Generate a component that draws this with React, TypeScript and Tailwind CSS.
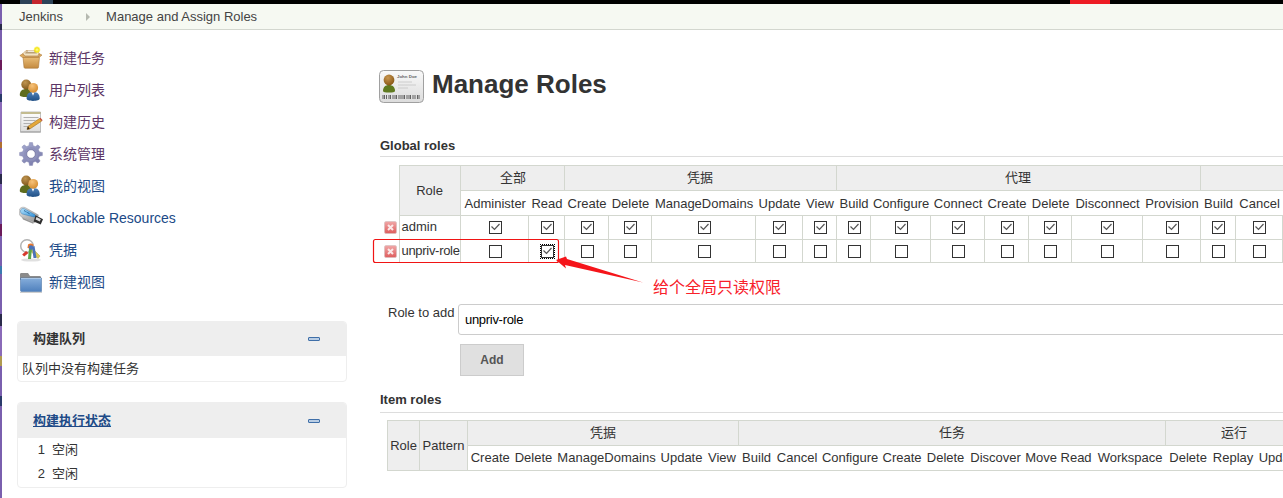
import React from "react";

const gearPath = (() => {
  const teeth = 8, cx = 12, cy = 12, ro = 11.5, ri = 8.6;
  let d = "";
  for (let i = 0; i < teeth; i++) {
    const a = (i / teeth) * Math.PI * 2 - Math.PI / 2;
    const s = (Math.PI * 2) / teeth;
    const pts: [number, number][] = [
      [ri, a - s * 0.32],
      [ro, a - s * 0.17],
      [ro, a + s * 0.17],
      [ri, a + s * 0.32],
    ];
    for (const [r, t] of pts) {
      d += `${d ? "L" : "M"}${(cx + r * Math.cos(t)).toFixed(2)} ${(cy + r * Math.sin(t)).toFixed(2)}`;
    }
  }
  return d + "Z";
})();

function BoxIcon() {
  return (
    <svg width="24" height="24" viewBox="0 0 24 24">
      <defs>
        <linearGradient id="boxa" x1="0" y1="0" x2="0" y2="1">
          <stop offset="0" stopColor="#e9bd78" />
          <stop offset="1" stopColor="#c48a3f" />
        </linearGradient>
        <radialGradient id="boxs">
          <stop offset="0" stopColor="#ffffa0" />
          <stop offset="0.55" stopColor="#f5e613" />
          <stop offset="1" stopColor="#f5e613" stopOpacity="0" />
        </radialGradient>
      </defs>
      <path d="M4 7.5 L7 4.5 H18 L20 7.5 L19 10 H5Z" fill="#f2e3c4" stroke="#b98a4c" strokeWidth=".6" />
      <path d="M7 5.5h10l1 2H6z" fill="#8a6a3a" opacity=".55" />
      <path d="M4 11h16.5l-1 10.3c-.1.6-.5.9-1 .9H6c-.6 0-1-.4-1-.9z" fill="url(#boxa)" stroke="#a87636" strokeWidth=".6" />
      <path d="M.8 9.5 4 7.6 6 10.4H21.5L23 9 20 7.6 19.5 11.5H3.5z" fill="#dca95f" stroke="#a87636" strokeWidth=".5" />
      <rect x="9" y="4.6" width="6" height="1.2" fill="#fff" opacity=".8" />
      <circle cx="18" cy="3.8" r="3.8" fill="url(#boxs)" />
    </svg>
  );
}

function UsersIcon({ id }: { id: string }) {
  return (
    <svg width="24" height="24" viewBox="0 0 24 24">
      <defs>
        <radialGradient id={id + "a"} cx=".4" cy=".3" r=".8">
          <stop offset="0" stopColor="#c09550" />
          <stop offset="1" stopColor="#7a5116" />
        </radialGradient>
        <radialGradient id={id + "b"} cx=".4" cy=".3" r=".8">
          <stop offset="0" stopColor="#f7c27a" />
          <stop offset="1" stopColor="#cf8526" />
        </radialGradient>
        <linearGradient id={id + "c"} x1="0" y1="0" x2="0" y2="1">
          <stop offset="0" stopColor="#4f80b8" />
          <stop offset="1" stopColor="#1f4f85" />
        </linearGradient>
      </defs>
      <path d="M.8 17c0-4 2.5-6 6.5-6s6.5 2.5 6.5 6c0 1.6-2.5 2-6.5 2s-6.5-.4-6.5-2z" fill="#5e6c1d" />
      <circle cx="7.2" cy="6.5" r="4.9" fill={`url(#${id}a)`} />
      <path d="M7.6 20.5c0-4.4 2-6.5 6.4-6.5s6.7 2 6.7 6.5c0 1.7-3 2.4-6.7 2.4s-6.400-.7-6.400-2.400z" fill={`url(#${id}c)`} />
      <path d="M12.500 14.200h3l-1.500 3.500z" fill="#fff" />
      <circle cx="14.200" cy="9.800" r="4.900" fill={`url(#${id}b)`} />
    </svg>
  );
}

function NoteIcon() {
  return (
    <svg width="24" height="24" viewBox="0 0 24 24">
      <defs>
        <linearGradient id="notea" x1="0" y1="0" x2="0" y2="1">
          <stop offset="0" stopColor="#ffffff" />
          <stop offset="1" stopColor="#dcdcdc" />
        </linearGradient>
      </defs>
      <rect x="1" y="20.500" width="21" height="2.500" rx="1" fill="#bdbdbd" />
      <path d="M2 2h19.500v19.500H1.500z" fill="url(#notea)" stroke="#a8a8a8" strokeWidth=".7" />
      <path d="M2.200 2h19.200v2H2.200z" fill="#d6cfa0" />
      <path d="M2.500 3h19" stroke="#8c8460" strokeWidth="1.100" strokeDasharray="1 1" />
      <path d="M4.500 7.500h15M4.500 10.500h12M4.500 13.500h8M4.500 16.500h5" stroke="#a9a9a9" strokeWidth=".9" />
      <path d="M8 19.500 9 16.300 20.500 8.500l2.300 2.500L10.800 19z" fill="#e4a83a" stroke="#8c5f16" strokeWidth=".5" />
      <path d="M8 19.500 9 16.300 10.800 19z" fill="#3a2a14" />
      <path d="M20.500 8.500l2.300 2.500 .9-.8-2.200-2.500z" fill="#c84a3a" />
    </svg>
  );
}

function GearIcon() {
  return (
    <svg width="24" height="24" viewBox="0 0 24 24">
      <defs>
        <linearGradient id="geara" x1="0" y1="0" x2=".6" y2="1">
          <stop offset="0" stopColor="#a6abd0" />
          <stop offset="1" stopColor="#7d7fae" />
        </linearGradient>
      </defs>
      <path d={gearPath} fill="url(#geara)" stroke="#8a8cb4" strokeWidth=".5" strokeLinejoin="round" />
      <circle cx="12" cy="12" r="7" fill="#8e91bb" />
      <circle cx="12" cy="12" r="4.300" fill="#fff" stroke="#6b6d98" strokeWidth=".7" />
    </svg>
  );
}

function UsbIcon() {
  return (
    <svg width="24" height="24" viewBox="0 0 24 24">
      <defs>
        <linearGradient id="usba" x1="0" y1="0" x2="1" y2="1">
          <stop offset="0" stopColor="#e6e6e6" />
          <stop offset="1" stopColor="#8f8f8f" />
        </linearGradient>
        <linearGradient id="usbb" x1="0" y1="0" x2="1" y2="1">
          <stop offset="0" stopColor="#b5e2fb" />
          <stop offset="1" stopColor="#2f8fd6" />
        </linearGradient>
      </defs>
      <path d="M0 5.500C0 2 3 .5 6 1.500L19.500 9l-3.600 7.500L3 11.300C1 10.400 0 8 0 5.500z" fill="url(#usba)" stroke="#808080" strokeWidth=".4" />
      <path d="M1.500 5C1.500 3 3.500 2 5.500 2.800L16 8.800c.6.500.5 1.200 0 1.700-.5.500-1.200.6-2 .3L3.500 8C2.200 7.500 1.500 6.300 1.500 5z" fill="url(#usbb)" stroke="#1f6aa8" strokeWidth=".4" />
      <path d="M5 4.500l6 3.500" stroke="#0e4a80" strokeWidth=".9" strokeDasharray="1 .6" />
      <path d="M16.500 9.200 24 13.200l-2.300 5.300-7-3z" fill="#2e2e2e" />
      <path d="M17.500 11l4.300 2.300-1 2.200-4.200-1.900z" fill="#dcdcdc" />
      <path d="M3 11.500l12 5-.8 1.200L4 13.500z" fill="#6a6a6a" opacity=".7" />
    </svg>
  );
}

function KeysIcon() {
  return (
    <svg width="24" height="24" viewBox="0 0 24 24">
      <ellipse cx="12" cy="22" rx="10" ry="1.600" fill="#000" opacity=".12" />
      <circle cx="8" cy="8" r="6.300" fill="none" stroke="#c4c4c4" strokeWidth="1.500" />
      <circle cx="8" cy="8" r="6.300" fill="none" stroke="#8a8a8a" strokeWidth=".4" />
      <path d="M12 9l9 9-2 2.500L10.500 12z" fill="#d9c95a" stroke="#9c8f30" strokeWidth=".4" />
      <path d="M10 10l-1 11h3l1-11z" fill="#5aa648" />
      <path d="M13 9l1.500 11h3l-2-12z" fill="#4a72b8" />
      <path d="M7 13l-3.800 3.500 2 2 4.300-3.500z" fill="#d83a2c" />
      <path d="M9 6.500c2-1.500 4.300-1.200 5.700.5l-2.700 3.800-3.500-.8z" fill="#e8772e" />
      <circle cx="12" cy="9.500" r="2.200" fill="#4a72b8" />
    </svg>
  );
}

function FolderIcon() {
  return (
    <svg width="24" height="24" viewBox="0 0 24 24">
      <defs>
        <linearGradient id="folda" x1="0" y1="0" x2="0" y2="1">
          <stop offset="0" stopColor="#86aedb" />
          <stop offset="1" stopColor="#4f80bd" />
        </linearGradient>
      </defs>
      <path d="M1 4.500C1 3.500 1.500 3 2.500 3H9l2 3h9.500c1 0 1.500.5 1.500 1.500V10H1z" fill="#8b8b8b" />
      <path d="M1.500 8h21v13.500H2.500c-.6 0-1-.4-1-1z" fill="url(#folda)" stroke="#3e6a9f" strokeWidth=".5" />
      <path d="M2 8.500h20" stroke="#b7d0ec" strokeWidth=".8" />
      <path d="M1 22h22v1H1z" fill="#cfcfcf" />
    </svg>
  );
}

function CardIcon() {
  return (
    <svg width="48" height="48" viewBox="0 0 48 48">
      <defs>
        <linearGradient id="carda" x1="0" y1="0" x2="0" y2="1">
          <stop offset="0" stopColor="#f9f9f9" />
          <stop offset="1" stopColor="#dcdcdc" />
        </linearGradient>
        <radialGradient id="cardb" cx=".4" cy=".3" r=".8">
          <stop offset="0" stopColor="#c9964f" />
          <stop offset="1" stopColor="#80500f" />
        </radialGradient>
      </defs>
      <rect x="2.500" y="10.500" width="44" height="32" rx="4" fill="url(#carda)" stroke="#a0a0a0" strokeWidth="1" />
      <path d="M6 31c0-4 2.500-6 6-6s6 2 6 6c0 1-2.500 1.500-6 1.500S6 32 6 31z" fill="#5f7a1f" />
      <circle cx="12" cy="20" r="5.400" fill="url(#cardb)" />
      <text x="20" y="18" fontSize="4.400" fontWeight="700" fill="#666" fontFamily="Liberation Sans, sans-serif">John Doe</text>
      <path d="M21 22h14M21 25h18M21 28h10" stroke="#cccccc" strokeWidth="1" />
      <path d="M6 35v4M7.500 35v4M9.500 35v4M12 35v4M13.500 35v4M16 35v4M18 35v4M19.500 35v4M22 35v4M24 35v4M26 35v4M27.500 35v4M30 35v4M32 35v4M33.500 35v4M36 35v4M38 35v4M40.500 35v4M42 35v4" stroke="#555" strokeWidth=".9" />
    </svg>
  );
}

function DeleteIcon() {
  return (
    <svg width="13" height="13" viewBox="0 0 13 13" className="block">
      <defs>
        <linearGradient id="dela" x1="0" y1="0" x2="0" y2="1">
          <stop offset="0" stopColor="#f0a8a8" />
          <stop offset="1" stopColor="#de5c5c" />
        </linearGradient>
      </defs>
      <rect x=".5" y=".5" width="12" height="12" rx="1.500" fill="url(#dela)" stroke="#d9c0c0" strokeWidth=".7" />
      <path d="M4 4l5 5M9 4l-5 5" stroke="#fbe9e9" strokeWidth="2" />
    </svg>
  );
}

function MinusIcon() {
  return <div className="w-[12px] h-[4px] rounded-[1px] border border-[#3f6fa8] bg-[#b9cde4]" />;
}

function Check({ checked, focus }: { checked?: boolean; focus?: boolean }) {
  return (
    <span
      className={
        focus
          ? "inline-block align-middle w-[13px] h-[13px] border border-[#333] bg-white outline-1 outline-dotted outline-black outline-offset-0"
          : "inline-block align-middle w-[13px] h-[13px] border border-[#333] bg-white"
      }
    >
      {checked && (
        <svg width="11" height="11" viewBox="0 0 11 11" className="block">
          <path d="M1.500 4.500 4.500 7.500 9.500 2" fill="none" stroke="#555" strokeWidth="1.200" />
        </svg>
      )}
    </span>
  );
}

const globalCols = [
  { label: "Administer", w: "w-[68px]" },
  { label: "Read", w: "w-[36px]" },
  { label: "Create", w: "w-[44px]" },
  { label: "Delete", w: "w-[43px]" },
  { label: "ManageDomains", w: "w-[104px]" },
  { label: "Update", w: "w-[47px]" },
  { label: "View", w: "w-[34px]" },
  { label: "Build", w: "w-[34px]" },
  { label: "Configure", w: "w-[60px]" },
  { label: "Connect", w: "w-[54px]" },
  { label: "Create", w: "w-[44px]" },
  { label: "Delete", w: "w-[43px]" },
  { label: "Disconnect", w: "w-[71px]" },
  { label: "Provision", w: "w-[58px]" },
  { label: "Build", w: "w-[35px]" },
  { label: "Cancel", w: "w-[47px]" },
  { label: "", w: "w-[60px]" },
];

const itemCols = [
  { label: "Create", w: "w-[44px]" },
  { label: "Delete", w: "w-[43px]" },
  { label: "ManageDomains", w: "w-[103px]" },
  { label: "Update", w: "w-[47px]" },
  { label: "View", w: "w-[34px]" },
  { label: "Build", w: "w-[35px]" },
  { label: "Cancel", w: "w-[46px]" },
  { label: "Configure", w: "w-[60px]" },
  { label: "Create", w: "w-[44px]" },
  { label: "Delete", w: "w-[43px]" },
  { label: "Discover", w: "w-[57px]" },
  { label: "Move", w: "w-[34px]" },
  { label: "Read", w: "w-[36px]" },
  { label: "Workspace", w: "w-[72px]" },
  { label: "Delete", w: "w-[44px]" },
  { label: "Replay", w: "w-[46px]" },
  { label: "Update", w: "w-[47px]" },
];

const sideLinks = [
  { text: "新建任务", icon: <BoxIcon />, color: "text-[#5c3566]" },
  { text: "用户列表", icon: <UsersIcon id="u1" />, color: "text-[#5c3566]" },
  { text: "构建历史", icon: <NoteIcon />, color: "text-[#5c3566]" },
  { text: "系统管理", icon: <GearIcon />, color: "text-[#5c3566]" },
  { text: "我的视图", icon: <UsersIcon id="u2" />, color: "text-[#204a87]" },
  { text: "Lockable Resources", icon: <UsbIcon />, color: "text-[#204a87]" },
  { text: "凭据", icon: <KeysIcon />, color: "text-[#204a87]" },
  { text: "新建视图", icon: <FolderIcon />, color: "text-[#204a87]" },
];

const edgeStrip = [
  "h-[20px] bg-[#7a5fae]", "h-[6px] bg-[#2a2a4a]", "h-[30px] bg-[#7a5fae]", "h-[10px] bg-[#6b1a5a]",
  "h-[24px] bg-[#7a5fae]", "h-[8px] bg-[#2a3a6a]", "h-[40px] bg-[#8a6ab8]", "h-[6px] bg-[#b07030]",
  "h-[26px] bg-[#7a5fae]", "h-[10px] bg-[#2a2a4a]", "h-[40px] bg-[#7a5fae]", "h-[12px] bg-[#6b1a5a]",
  "h-[30px] bg-[#7a5fae]", "h-[8px] bg-[#3a7ab0]", "h-[40px] bg-[#7a5fae]", "h-[12px] bg-[#2a2a4a]",
  "h-[30px] bg-[#8a6ab8]", "h-[10px] bg-[#b09a50]", "h-[30px] bg-[#7a5fae]", "h-[10px] bg-[#2a3a6a]",
];

function Panel({ title, link, children, headH }: { title: string; link?: boolean; children: React.ReactNode; headH: string }) {
  return (
    <section className="w-[330px] rounded-[4px] border border-[#eeeeee] overflow-hidden">
      <div className={`${headH} bg-[#eeeeee] flex items-center justify-between pl-[15px] pr-[26px]`}>
        <span className={link ? "text-[13px] font-bold text-[#204a87] underline" : "text-[13px] font-bold text-[#333]"}>{title}</span>
        <MinusIcon />
      </div>
      {children}
    </section>
  );
}

export default function App() {
  return (
    <div className="relative w-[1283px] h-[498px] overflow-hidden bg-white flex flex-col text-[13px] text-[#333] font-['Liberation_Sans','Noto_Sans_CJK_SC',sans-serif]">
      {/* desktop strip behind the window */}
      <div className="h-[4px] bg-black flex shrink-0">
        <div className="w-[20px]" />
        <div className="w-[33px] bg-[#2c4258] flex justify-center">
          <div className="w-[10px] bg-[#c4262e]" />
        </div>
        <div className="w-[1017px]" />
        <div className="w-[40px] bg-[#ed1c24]" />
      </div>

      <div className="flex flex-1 min-h-0">
        <div className="w-[2px] shrink-0 flex flex-col bg-[#7a5fae]">
          {edgeStrip.map((c, i) => (
            <div key={i} className={c} />
          ))}
        </div>

        <div className="flex-1 min-w-0 flex flex-col">
          <nav className="h-[26px] shrink-0 bg-[#f6f9f2] border-b border-[#d3d7cf] flex items-center text-[#444]">
            <span className="ml-[17px]">Jenkins</span>
            <span className="ml-[23px] w-0 h-0 border-y-[4px] border-y-transparent border-l-[4px] border-l-[#b5b9b0]" />
            <span className="ml-[16px]">Manage and Assign Roles</span>
          </nav>

          <div className="flex flex-1 min-h-0">
            <aside className="w-[358px] shrink-0 pt-[12px]">
              <ul className="pl-[17px]">
                {sideLinks.map((l) => (
                  <li key={l.text} className="h-[32px] flex items-center gap-[6px]">
                    <span className="w-[24px] h-[24px] shrink-0">{l.icon}</span>
                    <span className={`text-[14px] ${l.color}`}>{l.text}</span>
                  </li>
                ))}
              </ul>
              <div className="pl-[15px] mt-[23px] flex flex-col gap-[20px]">
                <Panel title="构建队列" headH="h-[34px]">
                  <div className="h-[25px] pl-[4px] flex items-center">队列中没有构建任务</div>
                </Panel>
                <Panel title="构建执行状态" link headH="h-[35px]">
                  <div className="h-[49px] flex flex-col">
                    <div className="h-[24px] flex items-center"><span className="w-[27px] text-right">1</span><span className="ml-[7px]">空闲</span></div>
                    <div className="h-[24px] flex items-center"><span className="w-[27px] text-right">2</span><span className="ml-[7px]">空闲</span></div>
                  </div>
                </Panel>
              </div>
            </aside>

            <main className="flex-1 min-w-0 overflow-hidden pl-[20px] pt-[30px]">
              <div className="h-[48px] flex items-center gap-[7px] -ml-[3px]">
                <CardIcon />
                <h1 className="text-[26px] font-bold text-[#333] leading-none">Manage Roles</h1>
              </div>

              <h3 className="mt-[29px] h-[20px] border-b border-[#dddddd] font-bold text-[#333] leading-[17px]">Global roles</h3>

              <table className="mt-[8px] table-fixed border-collapse w-[962px] text-[13px]">
                <colgroup>
                  <col className="w-[19px]" />
                  <col className="w-[61px]" />
                  {globalCols.map((c, i) => (
                    <col key={i} className={c.w} />
                  ))}
                </colgroup>
                <thead>
                  <tr className="h-[25px]">
                    <th />
                    <th rowSpan={2} className="font-normal bg-[#eeeeee] border border-[#d3d7cf]">Role</th>
                    <th colSpan={2} className="font-normal bg-[#eeeeee] border border-[#d3d7cf] pl-[2px]">全部</th>
                    <th colSpan={5} className="font-normal bg-[#eeeeee] border border-[#d3d7cf]">凭据</th>
                    <th colSpan={7} className="font-normal bg-[#eeeeee] border border-[#d3d7cf]">代理</th>
                    <th colSpan={3} className="font-normal bg-[#eeeeee] border border-[#d3d7cf]" />
                  </tr>
                  <tr className="h-[25px]">
                    <th />
                    {globalCols.map((c, i) => (
                      <th key={i} className="font-normal border-b border-[#d3d7cf] whitespace-nowrap pl-[2px] pr-0 pt-[1px]">{c.label}</th>
                    ))}
                  </tr>
                </thead>
                <tbody>
                  {[
                    { name: "admin", all: true, h: "h-[24px]", t: "border border-[#d3d7cf] pl-[2px] pb-[1px] whitespace-nowrap" },
                    { name: "unpriv-role", all: false, h: "h-[23px]", t: "border border-[#d3d7cf] pl-[2px] pb-[1px] whitespace-nowrap tracking-[-0.3px]" },
                  ].map((r) => (
                    <tr key={r.name} className={r.h}>
                      <td className="pl-[4px]"><DeleteIcon /></td>
                      <td className={r.t}>{r.name}</td>
                      {globalCols.map((c, i) => (
                        <td key={i} className="border border-[#d3d7cf] text-center leading-none pl-[2px] pb-[1px]">
                          <Check checked={r.all || i === 1} focus={!r.all && i === 1} />
                        </td>
                      ))}
                    </tr>
                  ))}
                </tbody>
              </table>

              <div className="mt-[41px] flex items-start">
                <label className="ml-[8px] w-[70px] pt-[1px] leading-[15px]">Role to add</label>
                <div className="flex-1 min-w-0 -mr-[6px]">
                  <div className="h-[31px] border border-[#cccccc] rounded-[3px] flex items-center pl-[6px] text-black tracking-[-0.3px]">unpriv-role</div>
                  <div className="mt-[9px] ml-[2px] w-[64px] h-[32px] bg-[#e0e0e0] border border-[#cccccc] flex items-center justify-center text-[12px] font-bold text-[#555]">Add</div>
                </div>
              </div>

              <h3 className="mt-[16px] h-[21px] border-b border-[#dddddd] font-bold text-[#333] leading-[15px]">Item roles</h3>

              <table className="ml-[7px] mt-[7px] table-fixed border-collapse w-[896px] text-[13px]">
                <colgroup>
                  <col className="w-[32px]" />
                  <col className="w-[48px]" />
                  {itemCols.map((c, i) => (
                    <col key={i} className={c.w} />
                  ))}
                </colgroup>
                <thead>
                  <tr className="h-[25px]">
                    <th rowSpan={2} className="font-normal bg-[#eeeeee] border border-[#d3d7cf]">Role</th>
                    <th rowSpan={2} className="font-normal bg-[#eeeeee] border border-[#d3d7cf]">Pattern</th>
                    <th colSpan={5} className="font-normal bg-[#eeeeee] border border-[#d3d7cf]">凭据</th>
                    <th colSpan={9} className="font-normal bg-[#eeeeee] border border-[#d3d7cf]">任务</th>
                    <th colSpan={3} className="font-normal bg-[#eeeeee] border border-[#d3d7cf]">运行</th>
                  </tr>
                  <tr className="h-[25px]">
                    {itemCols.map((c, i) => (
                      <th key={i} className="font-normal border-b border-[#d3d7cf] whitespace-nowrap pl-[1px] pr-0">{c.label}</th>
                    ))}
                  </tr>
                </thead>
              </table>
            </main>
          </div>
        </div>
      </div>

      {/* hand-drawn annotation on top of the screenshot */}
      <svg className="absolute left-[370px] top-[235px] pointer-events-none" width="280" height="55" viewBox="370 235 280 55">
        <rect x="373.500" y="239.500" width="185" height="23" rx="2" fill="none" stroke="#f01414" strokeWidth="1.200" />
        <polygon points="556,260 566,256.500 567,259 643,282.500 565,265 566,268.500" fill="#f5151a" />
      </svg>
      <span className="absolute left-[653px] top-[277px] text-[16px] leading-[22px] text-[#f8212a]">给个全局只读权限</span>
    </div>
  );
}
